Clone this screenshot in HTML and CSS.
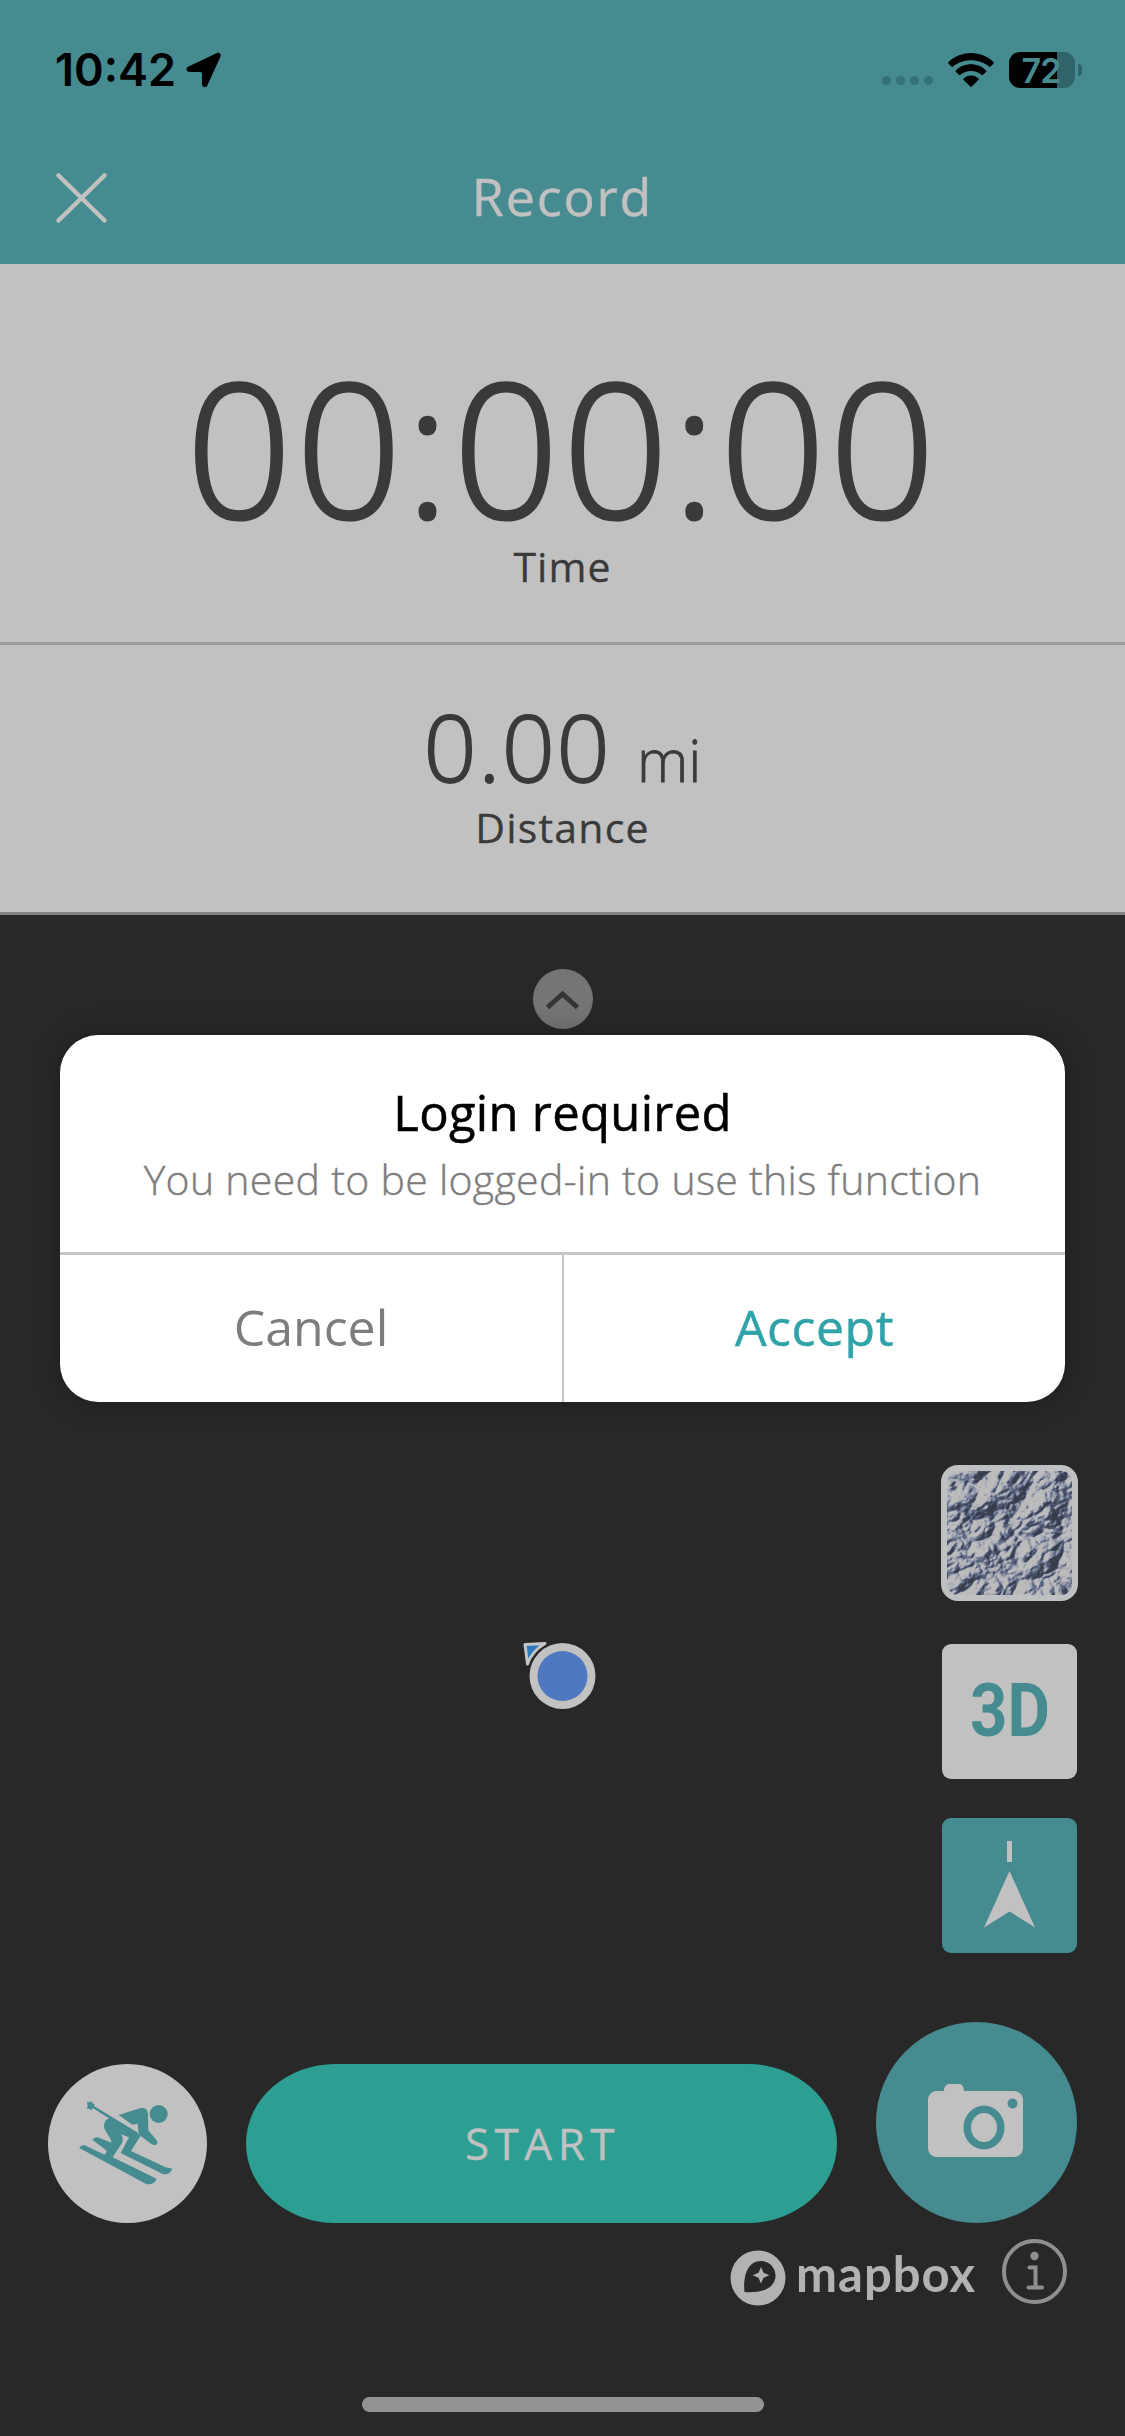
FILE: index.html
```html
<!DOCTYPE html>
<html lang="en">
<head>
<meta charset="utf-8">
<title>Record</title>
<link rel="stylesheet" href="styles.css">
</head>
<body>
<div class="screen">
  <header class="header">
    <div class="status">
      <div class="status-left">
        <span class="clock">10:42</span>
        <svg class="location" width="36" height="36" viewBox="0 0 36 36"><path d="M2.500 14.500 30.500 1.200C33.500 0 35.500 2 34.300 4.900L21.300 33.500C20 36.200 16 35.500 16 32V21.500Q16 20 14.500 20H3.800C.2 20-.8 16.200 2.500 14.500z"/></svg>
      </div>
      <div class="status-right">
        <div class="signal"><i></i><i></i><i></i><i></i></div>
        <svg class="wifi" width="46" height="34" viewBox="0 0 46 34"><path d="M23 0C14 0 6 3.500.6 9c-.5.500-.5 1.200 0 1.700l2.800 2.800c.5.500 1.200.5 1.700 0C9.700 9.800 16 7.300 23 7.300s13.300 2.500 17.900 6.200c.5.500 1.200.5 1.700 0l2.800-2.800c.5-.5.5-1.200 0-1.700C40 3.500 32 0 23 0z"/><path d="M23 11.300c-6 0-11.400 2.300-15 6-.5.500-.5 1.200 0 1.700l2.900 2.800c.5.500 1.200.4 1.600 0 2.700-2.300 6.400-3.700 10.500-3.700s7.800 1.400 10.500 3.700c.4.400 1.100.5 1.600 0L38 19c.5-.5.5-1.200 0-1.700-3.600-3.700-9-6-15-6z"/><path d="M23 22.500c-2.900 0-5.500 1.100-7.400 2.900-.5.500-.4 1.200 0 1.700l6.600 6.400c.5.500 1.100.5 1.600 0l6.600-6.400c.4-.5.5-1.200 0-1.700-1.900-1.800-4.500-2.900-7.400-2.900z"/></svg>
        <div class="battery"><div class="battery-body">72</div><i class="battery-tip"></i></div>
      </div>
    </div>
    <div class="nav">
      <svg class="close" width="54" height="54" viewBox="0 0 54 54"><path d="M4.500 4.500l46 45M50.500 4.500l-46 45"/></svg>
      <h1 class="nav-title">Record</h1>
    </div>
  </header>

  <section class="stat stat-time">
    <div class="time-value">00:00:00</div>
    <div class="stat-label label-time">Time</div>
  </section>
  <section class="stat stat-distance">
    <div class="distance-value"><span class="number">0.00</span><span class="unit">mi</span></div>
    <div class="stat-label label-distance">Distance</div>
  </section>

  <main class="map">
    <button class="collapse"><svg width="60" height="60" viewBox="0 0 60 60"><path d="M14.500 38.500 29.500 25l15 13.500"/></svg></button>

    <svg class="puck" width="80" height="80" viewBox="0 0 80 80">
      <path class="heading" d="M5 4.500 25 3.500Q12 11 7.500 24z"/>
      <circle class="puck-ring" cx="42.500" cy="36" r="33"/>
      <circle class="puck-dot" cx="42.500" cy="36" r="25"/>
    </svg>

    <div class="tools">
      <button class="tool-layer">
        <svg width="125" height="124" viewBox="0 0 125 124">
          <defs>
            <filter id="terrain" x="0" y="0" width="100%" height="100%" color-interpolation-filters="sRGB">
              <feTurbulence type="turbulence" baseFrequency="0.022 0.026" numOctaves="5" seed="8" result="height"/>
              <feColorMatrix in="height" type="matrix" values="0 0 0 0 0  0 0 0 0 0  0 0 0 0 0  1 0 0 0 0"/>
              <feDiffuseLighting surfaceScale="13" diffuseConstant="1.100" lighting-color="#fff"><feDistantLight azimuth="235" elevation="42"/></feDiffuseLighting>
              <feComponentTransfer>
                <feFuncR type="table" tableValues="0.220 0.270 0.330 0.400 0.520 0.640 0.710 0.740"/>
                <feFuncG type="table" tableValues="0.240 0.300 0.370 0.440 0.550 0.650 0.710 0.740"/>
                <feFuncB type="table" tableValues="0.300 0.380 0.470 0.550 0.630 0.690 0.730 0.740"/>
              </feComponentTransfer>
            </filter>
          </defs>
          <g transform="rotate(-25 62 62)"><rect x="-40" y="-40" width="205" height="205" filter="url(#terrain)"/></g>
        </svg>
      </button>
      <button class="tool tool-3d"><span>3D</span></button>
      <button class="tool tool-compass"><svg width="135" height="135" viewBox="0 0 135 135"><path d="M65 23h5v21h-5zM67.500 53 93 109.500 67.500 93.500 42 109.500z"/></svg></button>
    </div>

    <div class="controls">
      <button class="activity">
        <svg width="140" height="130" viewBox="0 0 420 390">
          <circle cx="296" cy="102" r="27"/>
          <path d="M81 66l8 1 5-4 3 7 7 2-2 6 133 81-4 9L98 84l-5 7-5-5-7 1 2-8z"/>
          <path d="M176 105l64-20c15-4 23 2 24 17l1 49 24 29c9 12-2 19-14 13l-38-29-2-11-2-22-16 3z"/>
          <path d="M154 113l88 54-29 46 104 49 20 4c-5 14-16 19-29 16L182 219l25-47-24-9c6 9 7 18 3 26l-28 43 132 64c-6 15-18 20-33 15L58 204c4-8 11-10 19-7l57 27 20-34-1-10-19-32c-6-15 2-34 20-35z"/>
          <path d="M98 180c3-7 8-9 15-8l44 17-13 26z"/>
        </svg>
      </button>
      <button class="start">START</button>
      <button class="camera"><svg width="96" height="74" viewBox="0 0 96 74"><path fill-rule="evenodd" d="M9 7h7c0-4 2-7 5-7h10c3 0 5 3 5 7h50c5 0 9 4 9 9v48c0 5-4 9-9 9H9c-5 0-9-4-9-9V16c0-5 4-9 9-9zM56 21.500a20.500 22 0 1 0 0 44 20.500 22 0 1 0 0-44zM84.500 14.500a5 5 0 1 0 0 10 5 5 0 1 0 0-10z"/><ellipse cx="56" cy="43.500" rx="13" ry="14.500"/></svg></button>
    </div>

    <div class="attribution">
      <svg class="mapbox-mark" width="56" height="56" viewBox="0 0 56 56"><path fill-rule="evenodd" d="M28 .5a27.500 27.500 0 1 0 0 55 27.500 27.500 0 1 0 0-55zM14.500 42C13 27 17 11 31 11c8 0 14.500 6.500 14.500 14.500C45.500 39 30 43.500 14.500 42zM31 17l-2.500 5.800-5.800 2.500 5.800 2.500L31 33.500l2.500-5.700 5.800-2.500-5.800-2.500z"/></svg>
      <span class="mapbox-name">mapbox</span>
      <svg class="info" width="66" height="66" viewBox="0 0 66 66"><circle class="info-ring" cx="32.500" cy="32.500" r="30.500"/><circle class="info-dot" cx="32.500" cy="17" r="4.200"/><path d="M27.500 28.500h6v20M26.500 48.500h13.500"/></svg>
    </div>
    <div class="home-indicator"></div>
  </main>

  <div class="dialog" role="alertdialog">
    <div class="dialog-body">
      <h2 class="dialog-title">Login required</h2>
      <p class="dialog-text">You need to be logged-in to use this function</p>
    </div>
    <div class="dialog-actions">
      <button class="cancel">Cancel</button>
      <button class="accept">Accept</button>
    </div>
  </div>
</div>
</body>
</html>
```
FILE: styles.css
```css
* { box-sizing: border-box; margin: 0; padding: 0; }
body { background: #282828; font-family: "Open Sans", "Noto Sans", sans-serif; color: #3a3a3a; }
button { border: 0; background: none; font: inherit; color: inherit; display: flex; align-items: center; justify-content: center; }
svg { display: block; flex: none; }

.screen { position: relative; width: 1125px; height: 2436px; overflow: hidden; display: flex; flex-direction: column; background: #282828; }

.header { height: 264px; background: #458b90; flex: none; }
.status { height: 139px; display: flex; justify-content: space-between; align-items: center; padding: 0 43px 0 55px; font-family: Inter, "Liberation Sans", sans-serif; }
.status-left, .status-right { display: flex; align-items: center; }
.clock { font-size: 45px; font-weight: 600; line-height: 50px; color: #000; letter-spacing: 0; }
.location { margin-left: 10px; }
.signal { display: flex; gap: 5px; margin: 22px 15px 0 0; }
.signal i { width: 9px; height: 9px; border-radius: 50%; background: #34717a; }
.wifi { margin-right: 15px; }
.battery { display: flex; align-items: center; gap: 3px; }
.battery-body { width: 66px; height: 36px; border-radius: 11px; background: linear-gradient(90deg, #000 48px, #30636a 48px); color: #458b90; font-size: 34px; font-weight: 600; line-height: 37px; text-align: center; padding-right: 2px; letter-spacing: -1px; }
.battery-tip { width: 4px; height: 12px; border-radius: 0 4px 4px 0; background: #30636a; }

.nav { height: 117px; display: grid; grid-template-columns: 140px 1fr 140px; align-items: center; }
.close { margin-left: 54px; fill: none; stroke: #c1c1c1; stroke-width: 4.5; stroke-linecap: round; }
.nav-title { font-size: 52px; font-weight: 400; line-height: 60px; text-align: center; color: #c1c1c1; letter-spacing: 1.8px; margin-top: -4px; -webkit-text-stroke: .4px #c1c1c1; }

.stat { flex: none; background: #c1c1c1; text-align: center; }
.stat-time { height: 381px; padding-top: 87px; border-bottom: 3px solid #9d9d9d; }
.stat-distance { height: 270px; padding-top: 50px; border-bottom: 3px solid #838383; }
.time-value { font-size: 186px; font-weight: 300; line-height: 190px; letter-spacing: 3.4px; -webkit-text-stroke: 3.2px #3a3a3a; }
.stat-label { font-size: 41px; line-height: 50px; -webkit-text-stroke: .3px #3a3a3a; }
.label-time { margin-top: 0; letter-spacing: 1px; }
.label-distance { margin-top: 7px; letter-spacing: 1.2px; }
.distance-value { line-height: 102px; height: 100px; display: flex; justify-content: center; align-items: baseline; }
.number { font-size: 93px; font-weight: 300; letter-spacing: 1.5px; -webkit-text-stroke: 1.8px #3a3a3a; }
.unit { font-size: 58px; font-weight: 300; margin-left: 26px; -webkit-text-stroke: .8px #3a3a3a; }

.map { flex: 1; display: flex; flex-direction: column; position: relative; }
.collapse { width: 60px; height: 60px; margin: 54px auto 0; border-radius: 50%; background: #757575; }
.collapse path { fill: none; stroke: #353535; stroke-width: 5; }
.puck { position: absolute; left: 520px; top: 725px; }
.heading { fill: #2e78be; stroke: #c4c4c4; stroke-width: 3; stroke-linejoin: round; }
.puck-ring { fill: #c2c2c2; }
.puck-dot { fill: #4e78bf; }

.tools { align-self: flex-end; width: 137px; margin: 436px 47px 0 0; display: flex; flex-direction: column; align-items: center; }
.tool-layer { width: 137px; height: 136px; border: 6px solid #bfc0c1; border-radius: 17px; overflow: hidden; margin-bottom: 43px; background: #bfc0c1; }
.tool { width: 135px; height: 135px; border-radius: 9px; }
.tool-3d { background: #c1c1c1; color: #458b90; margin-bottom: 39px; font-family: Roboto, sans-serif; font-weight: 700; font-size: 75px; line-height: 80px; padding-bottom: 3px; }
.tool-3d span { transform: scaleX(.87); }
.tool-compass { background: #458b90; fill: #c1c1c1; }

.controls { height: 201px; margin-top: 69px; padding: 0 48px; display: flex; align-items: flex-end; justify-content: space-between; }
.activity { width: 159px; height: 159px; border-radius: 50%; background: #c1c1c1; fill: #458b90; padding: 3px 0 0 4px; }
.start { width: 591px; height: 159px; border-radius: 90px / 80px; background: #2c9f92; color: #c1c1c1; font-size: 44px; letter-spacing: 5.500px; padding: 0 0 2px 2px; -webkit-text-stroke: .4px #c1c1c1; }
.camera { width: 201px; height: 201px; border-radius: 50%; background: #458b90; fill: #c1c1c1; padding-right: 2px; padding-bottom: 3px; }

.attribution { height: 67px; margin-top: 16px; padding-right: 57px; display: flex; justify-content: flex-end; align-items: flex-start; }
.mapbox-mark { fill: #b2b2b2; margin-top: 11px; }
.mapbox-name { width: 206px; margin-left: 10px; margin-top: 9px; font-family: Lato, sans-serif; font-weight: 700; font-size: 49px; line-height: 50px; letter-spacing: 1px; color: #b2b2b2; }
.info { fill: none; stroke: #8f8f8f; stroke-width: 4; stroke-linecap: round; }
.info-dot { fill: #8f8f8f; stroke: none; }
.home-indicator { width: 402px; height: 15px; border-radius: 8px; background: #939393; margin: 91px auto 0; }

.dialog { position: absolute; left: 60px; top: 1035px; width: 1005px; height: 367px; background: #fff; border-radius: 38px; overflow: hidden; box-shadow: 0 0 28px rgba(0, 0, 0, .3); text-align: center; }
.dialog-body { height: 217px; padding-top: 47px; }
.dialog-title { font-size: 49px; font-weight: 400; line-height: 60px; color: #000; letter-spacing: .3px; -webkit-text-stroke: .5px #000; }
.dialog-text { margin-top: 12px; font-size: 41px; font-weight: 300; line-height: 50px; letter-spacing: .3px; color: #7d7d7d; -webkit-text-stroke: .4px #7d7d7d; white-space: nowrap; }
.dialog-actions { display: grid; grid-template-columns: 504px 1fr; height: 150px; border-top: 3px solid #c6c6c6; font-size: 50px; }
.dialog-actions button { padding-bottom: 3px; }
.cancel { color: #7d7d7d; border-right: 2px solid #c6c6c6; }
.accept { color: #30a3a9; letter-spacing: .5px; -webkit-text-stroke: .5px #30a3a9; }
```
